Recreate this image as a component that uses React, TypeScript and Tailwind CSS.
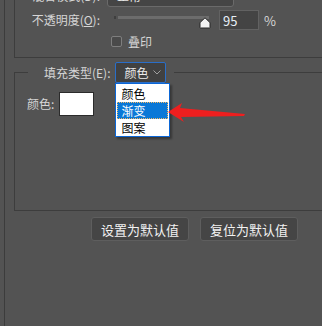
import React from "react";

const LINE = "border-[#3d3d3d]";

function Chevron({ className }: { className?: string }) {
  return (
    <svg width="8" height="5" viewBox="0 0 8 5" className={className}>
      <path d="M0.5 0.5 L4 4 L7.5 0.5" fill="none" stroke="#a0a0a0" strokeWidth="1" />
    </svg>
  );
}

export default function App() {
  return (
    <div className="relative w-[322px] h-[326px] overflow-hidden bg-[#535353] flex font-['Noto_Sans_CJK_SC',sans-serif] text-[12px] leading-none text-[#d6d6d6]">
      <div className="w-[4px] shrink-0" />
      <div className="w-px shrink-0 bg-[#3c3c3c]" />
      <div className="flex-1 flex flex-col pl-[9px]">
        {/* top group */}
        <div className={`-mt-[24px] -mr-[20px] h-[82px] border-l border-b ${LINE} flex flex-col pt-[9px]`}>
          <div className="flex items-center h-[22px]">
            <div className="w-[86px] text-right pr-px">混合模式(D):</div>
            <div className="ml-[6px] w-[127px] h-[22px] bg-[#454545] border border-[#6a6a6a] rounded-[3px] flex items-center pl-[9px] pr-[5px] text-[#e8e8e8]">
              <span className="flex-1">正常</span>
              <Chevron />
            </div>
          </div>
          <div className="flex items-center h-[20px] mt-[3px]">
            <div className="w-[86px] text-right pr-px">
              不透明度(<span className="underline">O</span>):
            </div>
            <div className="relative ml-[13px] w-[95px] h-[20px]">
              <div className="mt-[6px] flex h-[3px]">
                <div className="w-[2px] bg-[#3f3f3f]" />
                <div className="w-[2px]" />
                <div className="flex-1 bg-[#6c6c6c]" />
              </div>
              <svg width="12" height="12" viewBox="0 0 12 12" className="absolute left-[85px] top-[7px]">
                <path d="M6 0.8 L10.6 5.2 Q11 5.6 11 6.2 L11 10.4 Q11 11 10.4 11 L1.6 11 Q1 11 1 10.4 L1 6.2 Q1 5.6 1.4 5.2 Z" fill="#f2f2f2" stroke="#262626" strokeWidth="1" />
              </svg>
            </div>
            <div className="ml-[10px] w-[40px] h-[20px] bg-[#444444] border border-[#626262] flex items-center pl-[3px] text-[13px] text-[#e6eef6]">
              95
            </div>
            <div className="ml-[5px] text-[13px]">%</div>
          </div>
          <div className="flex items-center h-[13px] mt-[5px]">
            <div className="ml-[96px] w-[11px] h-[11px] rounded-[2px] border border-[#7e7e7e] bg-[#4a4a4a]" />
            <div className="ml-[6px]">叠印</div>
          </div>
        </div>

        {/* fill type group */}
        <fieldset className={`mt-[4px] -mr-[20px] h-[149px] border-l border-t border-b ${LINE} pl-[13px]`}>
          <legend className="pl-[16px] pr-[8px]">
            <div className="flex items-center h-[21px]">
              <span>填充类型(E):</span>
              <div className="relative ml-[4px]">
                <div className="w-[51px] h-[21px] bg-[#414141] border border-[#2a6ec8] rounded-[2px] flex items-center pl-[9px] pr-[4px] text-[#ececec]">
                  <span className="flex-1">颜色</span>
                  <Chevron />
                </div>
                <div className="absolute left-0 top-full w-[55px] h-[54px] bg-white border border-[#0b66d6] shadow-[2px_2px_2px_rgba(0,0,0,0.35)] flex flex-col px-px pt-px text-black">
                  <div className="h-[17px] flex items-center pl-[5px]">颜色</div>
                  <div className="h-[17px] flex items-center pl-[4px] bg-[#0a78d7] text-white border border-dotted border-[#f0b868]">渐变</div>
                  <div className="h-[17px] flex items-center pl-[5px]">图案</div>
                </div>
              </div>
            </div>
          </legend>
          <div className="flex items-center mt-[9px] -ml-px">
            <div className="w-[28px]">颜色:</div>
            <div className="ml-[4px] w-[35px] h-[24px] bg-white border border-[#2b2b2b]" />
          </div>
        </fieldset>

        {/* buttons */}
        <div className="flex justify-end pr-[24px] gap-[11px] mt-[6px]">
          <div className="w-[98px] h-[24px] bg-[#454545] border border-[#5e5e5e] rounded-[3px] flex items-center justify-center text-[13px] text-[#f2f2f2]">
            设置为默认值
          </div>
          <div className="w-[98px] h-[24px] bg-[#454545] border border-[#5e5e5e] rounded-[3px] flex items-center justify-center text-[13px] text-[#f2f2f2]">
            复位为默认值
          </div>
        </div>
      </div>

      {/* red annotation arrow */}
      <svg className="absolute inset-0 pointer-events-none" width="322" height="326" viewBox="0 0 322 326">
        <polygon points="168,112 182,103 180,108 245,114 244,116 181,117 184,122" fill="#ee1f1f" />
      </svg>
    </div>
  );
}
